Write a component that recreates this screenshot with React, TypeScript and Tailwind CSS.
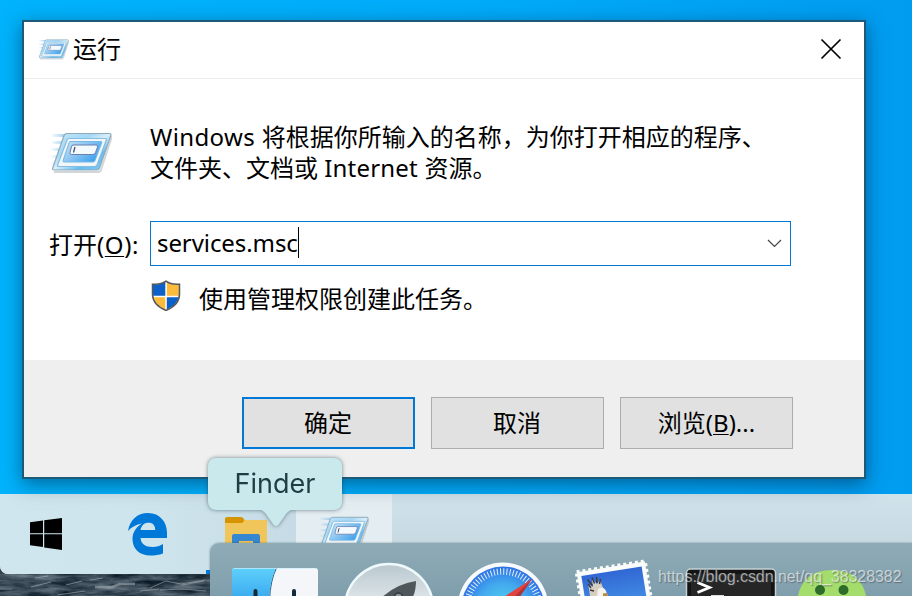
import React from "react";

function RunIcon({ className }: { className: string }) {
  return (
    <svg className={className} viewBox="0 0 62 42">
      <defs>
        <linearGradient id="runFrame" x1="0" y1="0" x2="1" y2="1">
          <stop offset="0" stopColor="#c4e6f8" />
          <stop offset="0.35" stopColor="#a5d8f7" />
          <stop offset="0.5" stopColor="#d9eefa" />
          <stop offset="0.7" stopColor="#62bdf3" />
          <stop offset="1" stopColor="#8fccf2" />
        </linearGradient>
        <linearGradient id="runInner" x1="0" y1="0" x2="1" y2="0.6">
          <stop offset="0" stopColor="#c9e5f7" />
          <stop offset="0.5" stopColor="#8cc6f2" />
          <stop offset="1" stopColor="#3fa2ee" />
        </linearGradient>
        <linearGradient id="runTrail" x1="0" y1="0" x2="1" y2="0">
          <stop offset="0" stopColor="#8fc9f0" stopOpacity="0" />
          <stop offset="1" stopColor="#8fc3ec" stopOpacity="0.8" />
        </linearGradient>
      </defs>
      <g fill="url(#runTrail)">
        <path d="M2 2h13l-1 3H2zM2 9h11l-1 3H2zM1 16h9l-1 3H1zM1 23h6l-1 3H1zM0 30h5l-1 3H0z" />
      </g>
      <path d="M4 40h44c1.500 0 2.400-.6 3-2L62 4" fill="none" stroke="#7d8a92" strokeOpacity=".35" strokeWidth="2" />
      <path d="M17 1.500h42.500q2 0 1.300 2L49.500 36q-.6 2-2.600 2H4q-2 0-1.300-2L14 3.500q.8-2 3-2z" fill="url(#runFrame)" stroke="#91aab7" strokeWidth="1.200" />
      <path d="M19 6.500h36.500q1.300 0 .8 1.400L47 33q-.5 1.500-2 1.500H8.500q-1.500 0-.9-1.500L17 8q.6-1.500 2-1.500z" fill="#f3f6f8" stroke="#85bdde" strokeWidth="1.200" />
      <path d="M20 9.500h31q1.200 0 .8 1.200L45 28.500q-.6 1.500-2 1.500H14q-1.500 0-1-1.400l6-17.700q.3-1.400 1-1.400z" fill="url(#runInner)" stroke="#77b9e4" strokeWidth="1" />
      <path d="M23 13h23q2 0 1.500 2l-2 5.500q-.7 2-2.700 2H21.500q-2 0-1.500-2l1.400-5.500q.4-2 1.600-2z" fill="#f4f9fe" stroke="#6b7fae" strokeWidth="1" />
      <path d="M25 15l-1.500 5.500" stroke="#3c4560" strokeWidth="1.200" />
    </svg>
  );
}

function Shield() {
  return (
    <svg className="h-[31px] w-[30px]" viewBox="0 0 30 31">
      <defs>
        <clipPath id="shieldClip">
          <path d="M15 1.500C11 4 6 5 2 4.500V14c0 7 5 12.500 13 16 8-3.500 13-9 13-16V4.500C24 5 19 4 15 1.500z" />
        </clipPath>
      </defs>
      <g clipPath="url(#shieldClip)">
        <path fill="#fff" d="M0 0h30v31H0z" />
        <path fill="#0b61c9" d="M0 0h14.300v15.700H0zM15.800 17.200H30V31H15.800z" />
        <path fill="#fdbb3c" d="M15.800 0H30v15.700H15.800zM0 17.200h14.300V31H0z" />
      </g>
      <path d="M15 1.200C11 4 6 4.700 1.500 4.200V14c0 7 5 13 13.500 16.400C23.500 27 28.500 21 28.500 14V4.200C24 4.700 19 4 15 1.200z" fill="none" stroke="#55585c" strokeWidth="1.500" />
    </svg>
  );
}

function RunDialog() {
  return (
    <section className="absolute left-[22px] top-5 flex h-[459px] w-[844px] flex-col border-2 border-[#1d5a78] bg-white text-2xl leading-[31px] text-black shadow-[0_5px_18px_rgba(0,30,60,0.5)]">
      <header className="flex h-[57px] shrink-0 items-center border-b border-[#ececec] pb-0.5 pl-3.5 pr-[22px]">
        <RunIcon className="h-[21px] w-[31px]" />
        <h1 className="-mt-px ml-1 grow">运行</h1>
        <svg className="size-[22px]" viewBox="0 0 22 22">
          <path d="M1.500 1.500l19 19M20.500 1.500l-19 19" stroke="#000" strokeWidth="1.700" />
        </svg>
      </header>
      <div className="flex h-[281px] shrink-0 flex-col">
        <div className="mt-[42px] flex">
          <RunIcon className="ml-[26px] mt-[11px] h-[42px] w-[62px]" />
          <p className="ml-[38px] whitespace-nowrap">
            <span className="tracking-[0.38px]">Windows </span>将根据你所输入的名称，为你打开相应的程序、
            <br />
            文件夹、文档或 <span className="tracking-[0.2px]">Internet </span>资源。
          </p>
        </div>
        <div className="mt-[38px] flex h-[45px] items-center">
          <label className="w-[126px] whitespace-nowrap pl-[25px] pt-0.5">
            打开<span className="tracking-[0.6px]">(<span className="underline decoration-1 underline-offset-2">O</span>):</span>
          </label>
          <div className="flex h-[45px] w-[641px] items-center border border-[#0078d7] pb-0.5 pl-1.5 pr-2">
            <span className="tracking-[-0.08px]">services.msc</span>
            <span className="h-[31px] w-px bg-black" />
            <svg className="ml-auto mt-0.5 h-[9px] w-[15px]" viewBox="0 0 15 9">
              <path d="M1 1l6.500 6.500L14 1" fill="none" stroke="#444" strokeWidth="1.200" />
            </svg>
          </div>
        </div>
        <div className="ml-[127px] mt-3.5 flex items-start">
          <Shield />
          <span className="ml-[18px] mt-[3px]">使用管理权限创建此任务。</span>
        </div>
      </div>
      <footer className="flex grow items-start gap-4 bg-[#efefef] pl-[218px] pt-[37px]">
        <button className="h-[52px] w-[173px] border-2 border-[#0078d7] bg-[#e1e1e1] pb-0.5 pr-px">确定</button>
        <button className="h-[52px] w-[173px] border border-[#adadad] bg-[#e1e1e1] pb-0.5 pr-px">取消</button>
        <button className="h-[52px] w-[173px] border border-[#adadad] bg-[#e1e1e1] pb-0.5">
          浏览(<span className="underline decoration-1 underline-offset-2">B</span>)...
        </button>
      </footer>
    </section>
  );
}

function Taskbar() {
  return (
    <div className="bg-[#34434e]">
      <nav className="flex h-20 items-start rounded-bl-lg bg-linear-to-b from-[#cfe3eb] to-[#c2d4dd]">
        <div className="flex h-20 w-[296px] items-start rounded-bl-lg bg-linear-to-r from-[#d0e6ee] via-[#cfe5ed] to-[#c6dbe5]">
          <svg className="ml-[30px] mt-6 size-8" viewBox="0 0 32 32">
            <path d="M0 4.300l13-1.800V15.200H0zM14.200 2.300L32 0v15.200H14.200zM0 16.200h13V29L0 27.300zM14.200 16.200H32V32l-17.800-2.500z" />
          </svg>
          <svg className="ml-[66px] mt-[18.500px] h-[43px] w-10" viewBox="0 0 40 43">
            <path
              fill="#0078d7"
              d="M0 18C2 7 9 0 20 0c12 0 19 9 19 20v5H12.500c.5 6 5 9 12 9 4 0 7.500-1.200 10.500-3v9.500c-4 1.500-8 2-12.500 2C11.500 42.500 4.500 36 4.500 26c0-6.500 3.500-12 9.500-15.500C8 11.500 3.500 14 0 18zM12.500 17h14.700c0-4.500-2.200-7.200-6.700-7.200-4.500 0-7 2.700-8 7.200z"
            />
          </svg>
          <svg className="ml-[57px] mt-[22px] h-9 w-[42px]" viewBox="0 0 42 36">
            <path fill="#f0c559" d="M0 7h16l3.500-3H42v32H0z" />
            <path fill="#d69400" d="M0 3q0-2 2-2h14q2 0 3.500 3l-2 3H0z" />
            <path fill="#3587d0" d="M7 36V20q0-2 2-2h24q2 0 2 2v16H28V25H14v11z" />
          </svg>
        </div>
        <div className="flex h-20 w-24 justify-center bg-[#e4edf1] pt-[22px]">
          <RunIcon className="h-[34px] w-[50px]" />
        </div>
      </nav>
    </div>
  );
}

function Ocean() {
  return (
    <svg className="block h-[22px] w-[912px] bg-[#32404b]" viewBox="0 0 912 22">
      <defs>
        <filter id="waves" x="0" y="0" width="1" height="1" colorInterpolationFilters="sRGB">
          <feTurbulence type="fractalNoise" baseFrequency="0.035 0.16" numOctaves="4" seed="8" />
          <feColorMatrix values="0.6 0 0 0 -0.07  0.6 0 0 0 -0.01  0.6 0 0 0 0.04  0 0 0 0 1" />
        </filter>
      </defs>
      <rect width="912" height="22" filter="url(#waves)" />
      <g fill="none" stroke="#a2abb0" strokeOpacity=".6">
        <path d="M0 15h12M31 13l20-5M57 21l28-4M66 11l16-4M35 4l13-2M90 6l13-2M140 17l19-2M150 14l16-7 15 3 24-4M160 16l22-1 24 2M182 11l22-4" />
        <path d="M95 13h17l8-3h15" strokeWidth="2.500" />
      </g>
    </svg>
  );
}

const slot = "h-[53px] w-[114px] shrink-0";

function FinderIcon() {
  return (
    <svg className={slot} viewBox="218 543 114 53">
      <defs>
        <linearGradient id="finderBlue" x1="0" y1="0" x2="0" y2="1">
          <stop offset="0" stopColor="#5fd0fb" />
          <stop offset="1" stopColor="#38a8ee" />
        </linearGradient>
      </defs>
      <rect x="232" y="568" width="86" height="60" rx="3" fill="#f5f6f9" />
      <path d="M235 568h41q-6 12-7 32h-37v-29q0-3 3-3z" fill="url(#finderBlue)" />
      <path d="M276.500 568q-6 12-7 32" fill="none" stroke="#276d96" strokeWidth="1" />
      <path d="M255.500 591v9M294 591v9" stroke="#152a38" strokeWidth="4" strokeLinecap="round" />
      <path d="M234 568.500h82" stroke="#c9f2ff" strokeOpacity=".7" />
    </svg>
  );
}

function LaunchpadIcon() {
  return (
    <svg className={slot} viewBox="332 543 114 53">
      <defs>
        <linearGradient id="silver" x1="0" y1="0" x2="0" y2="1">
          <stop offset="0" stopColor="#b9c8ce" />
          <stop offset="0.5" stopColor="#e6ecee" />
        </linearGradient>
      </defs>
      <circle cx="389" cy="608" r="44" fill="url(#silver)" stroke="#edf9fb" strokeWidth="2.500" />
      <path d="M416 581q-21 3-37 19h32q5-7 5-19z" fill="#50575b" />
      <circle cx="398.500" cy="597" r="4" fill="#8d979b" stroke="#343a3e" strokeWidth="1.500" />
    </svg>
  );
}

function SafariIcon() {
  return (
    <svg className={slot} viewBox="446 543 114 53">
      <defs>
        <radialGradient id="compass" cx="0.5" cy="0.5" r="0.5">
          <stop offset="0" stopColor="#4fd4f0" />
          <stop offset="0.6" stopColor="#43a9ee" />
          <stop offset="1" stopColor="#2f72e4" />
        </radialGradient>
      </defs>
      <circle cx="503" cy="608" r="45.500" fill="#f8fbfd" />
      <circle cx="503" cy="608" r="41.500" fill="url(#compass)" />
      <circle cx="503" cy="608" r="36.500" fill="none" stroke="#e0effa" strokeWidth="6.500" strokeDasharray="1 2.185" />
      <path d="M532 579l-36 23 12 12z" fill="#e3423d" />
      <path d="M532 579l-29 29 5 6z" fill="#ac343d" />
    </svg>
  );
}

function MailIcon() {
  return (
    <svg className={slot} viewBox="560 543 114 53">
      <defs>
        <linearGradient id="stampSky" x1="0" y1="0" x2="0" y2="1">
          <stop offset="0" stopColor="#3167d4" />
          <stop offset="1" stopColor="#4aa0ec" />
        </linearGradient>
      </defs>
      <g transform="rotate(-9 575 571)">
        <rect x="576.500" y="572.500" width="69" height="60" fill="#fafcfc" stroke="#fafcfc" strokeWidth="4" strokeDasharray="3 2.900" />
        <rect x="580.500" y="577" width="61" height="50" fill="url(#stampSky)" />
      </g>
      <path d="M590 596q-1-8-2-12l5 3-1-8 5 5 3-4 3 8 5 8z" fill="#d6cec0" />
      <path d="M588 584l3 4M587.500 579.500l5 6M592 577.500l2.500 6M596.500 577l.5 6M600.500 579l-1 5M590 590l4 1" stroke="#3f3b3b" strokeWidth="1.500" />
      <path d="M598 589q5-4 8 2l2 5h-11z" fill="#f4f2ea" />
      <path d="M603 593.500l4-.5 1 3h-5z" fill="#b9883d" />
    </svg>
  );
}

function TerminalIcon() {
  return (
    <svg className={slot} viewBox="674 543 114 53">
      <rect x="686.500" y="569" width="89" height="60" rx="4" fill="#141414" stroke="#c4d2d5" strokeWidth="1.500" />
      <rect x="691" y="574" width="80" height="50" fill="#262626" />
      <path d="M697.500 582.500l12 5-12 5" fill="none" stroke="#fff" strokeWidth="2.800" />
      <path d="M711 596h13" stroke="#ddd" strokeWidth="2" />
    </svg>
  );
}

function AndroidIcon() {
  return (
    <svg className={slot} viewBox="788 543 114 53">
      <path d="M797 601q4-31 35-31t35 31z" fill="#a4dd6b" />
      <circle cx="820" cy="590" r="5" fill="#2e6c2a" />
      <circle cx="843.500" cy="590" r="5" fill="#2e6c2a" />
    </svg>
  );
}

function Dock() {
  return (
    <div className="absolute left-[210px] top-[543px] flex h-[53px] w-[702px] overflow-hidden rounded-tl-[9px] bg-linear-to-b from-[#90abb8] to-[#7f9eab] pl-2 shadow-[0_0_2px_rgba(50,70,80,0.6)]">
      <FinderIcon />
      <LaunchpadIcon />
      <SafariIcon />
      <MailIcon />
      <TerminalIcon />
      <AndroidIcon />
    </div>
  );
}

function DockTooltip() {
  return (
    <div className="absolute left-[208px] top-[458px] flex w-[134px] flex-col items-center drop-shadow-[0_0_2px_rgba(30,60,70,0.6)]">
      <div className="flex h-[52px] w-full items-center justify-center rounded-lg bg-[#c9e9ed] font-['Inter','Liberation_Sans',sans-serif] text-[27px] text-[#1f3d42]">
        Finder
      </div>
      <svg className="-mt-px ml-0.5 h-[18px] w-9" viewBox="0 0 36 18">
        <path d="M0 0h36q-5 1-8 5l-7 10q-3 4-6 0L8 5Q5 1 0 0z" fill="#c9e9ed" />
      </svg>
    </div>
  );
}

export default function App() {
  return (
    <main className="relative h-[596px] w-[912px] overflow-hidden font-['Noto_Sans','Noto_Sans_CJK_SC',sans-serif]">
      <div className="h-[494px] bg-linear-to-r from-[#00b3fc] via-[#00acfa] to-[#009cf0]" />
      <Taskbar />
      <Ocean />
      <RunDialog />
      <div className="absolute left-[206px] top-[570px] h-1 w-1 bg-[#0078d7]" />
      <Dock />
      <DockTooltip />
      <span className="absolute left-[658px] top-[567px] font-['Liberation_Sans',sans-serif] text-[16px] leading-5 tracking-[-0.06px] whitespace-nowrap text-white/60 [text-shadow:1px_1px_1px_rgba(60,70,75,0.5)]">
        https://blog.csdn.net/qq_38328382
      </span>
    </main>
  );
}
